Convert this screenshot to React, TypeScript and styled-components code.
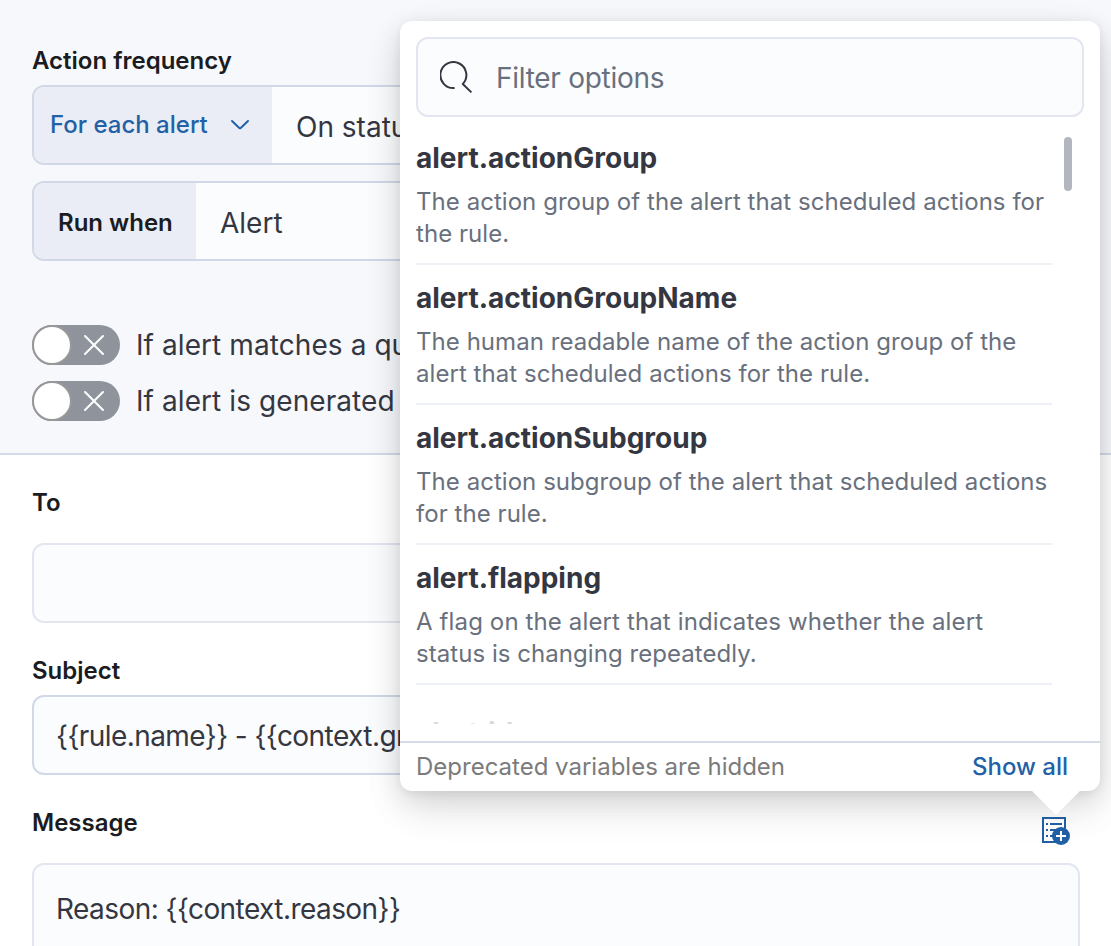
import React from "react";
import styled, { createGlobalStyle } from "styled-components";

const GlobalStyle = createGlobalStyle`
  *, *::before, *::after { box-sizing: border-box; }
  body {
    margin: 0;
    background: #fff;
    color: #343741;
    font-family: Inter, "Liberation Sans", sans-serif;
    overflow: hidden;
  }
`;

const Page = styled.main`
  position: relative;
  width: 1111px;
  height: 946px;
  overflow: hidden;
  background: #fff;
`;

const FrequencySection = styled.section`
  display: flex;
  flex-direction: column;
  height: 455px;
  padding: 45px 31px 0 32px;
  background: #f7f8fc;
  border-bottom: 2px solid #d3dae8;
`;

const FieldsSection = styled.section`
  display: flex;
  flex-direction: column;
  padding: 32px 31px 0 32px;
`;

const Label = styled.div<{ $gap: number }>`
  height: 32px;
  margin-bottom: ${(p) => p.$gap}px;
  font-size: 24px;
  line-height: 32px;
  font-weight: 600;
  color: #1a1c21;
`;

const Control = styled.div<{ $light?: boolean; $height?: number; $gap?: number }>`
  display: flex;
  flex: none;
  width: 1048px;
  height: ${(p) => p.$height ?? 80}px;
  margin-bottom: ${(p) => p.$gap ?? 0}px;
  overflow: hidden;
  background: #fbfcfe;
  border: 2px solid ${(p) => (p.$light ? "#e3e6f1" : "#d1d9e8")};
  border-radius: 12px;
`;

const Prepend = styled.div<{ $width: number }>`
  display: flex;
  align-items: center;
  flex: none;
  width: ${(p) => p.$width}px;
  background: #eaedf5;
  font-size: 24px;
  font-weight: 600;
  color: #1a1c21;
  padding: 2px 0 0 24px;
`;

const PrependButton = styled(Prepend)`
  padding: 0 0 2px 16px;
  gap: 20px;
  font-weight: 500;
  color: #2261a6;
`;

const Value = styled.div`
  padding: 0 24px;
  font-size: 28px;
  line-height: 81px;
  white-space: nowrap;
`;

const TemplateValue = styled.div<{ $lineHeight: number }>`
  padding: 0 22px;
  font-size: 28px;
  line-height: ${(p) => p.$lineHeight}px;
  letter-spacing: -0.56px;
  white-space: nowrap;
`;

const SwitchRow = styled.div`
  display: flex;
  align-items: center;
  gap: 16px;
  height: 40px;
  margin-bottom: 16px;
  font-size: 28px;
  letter-spacing: 0.08px;
  white-space: nowrap;
`;

const SwitchTrack = styled.span`
  display: flex;
  align-items: center;
  justify-content: space-between;
  width: 88px;
  height: 40px;
  padding-right: 15px;
  border-radius: 20px;
  background: #8f949c;
`;

const SwitchThumb = styled.span`
  width: 40px;
  height: 40px;
  border: 2px solid #989898;
  border-radius: 50%;
  background: #fff;
`;

const MessageHeader = styled.div`
  display: flex;
  justify-content: space-between;
  width: 1038px;
  height: 56px;
`;

const IconButton = styled.span`
  height: 28px;
  margin-top: 10px;
`;

const Popover = styled.div`
  position: absolute;
  left: 400px;
  top: 21px;
  width: 700px;
  height: 770px;
  display: flex;
  flex-direction: column;
  border-radius: 12px;
  background: #fff;
  box-shadow:
    0 2px 10px rgba(0, 0, 0, 0.06),
    0 7px 26px rgba(0, 0, 0, 0.07),
    0 14px 40px rgba(0, 0, 0, 0.08),
    0 20px 44px rgba(0, 0, 0, 0.06);
`;

const Arrow = styled.svg`
  position: absolute;
  left: 632px;
  top: 769px;
`;

const SearchBox = styled.div`
  display: flex;
  align-items: center;
  flex: none;
  height: 80px;
  margin: 16px 16px 0;
  padding: 2px 0 0 22px;
  gap: 22px;
  border: 2px solid #e3e6f1;
  border-radius: 12px;
  background: #fbfcfe;
  font-size: 28px;
  letter-spacing: -0.28px;
  color: #69707d;
`;

const ListViewport = styled.div`
  display: flex;
  justify-content: space-between;
  flex: none;
  height: 599px;
  margin-top: 8px;
  padding: 0 28px 0 16px;
  overflow: hidden;
`;

const List = styled.div`
  width: 636px;
`;

const ScrollThumb = styled.div`
  width: 8px;
  height: 54px;
  margin-top: 12px;
  border-radius: 4px;
  background: #b2b6be;
`;

const Item = styled.div`
  height: 140px;
  padding-top: 12px;
  border-bottom: 2px solid #eef2f7;
`;

const ItemTitle = styled.div`
  font-size: 28px;
  line-height: 42px;
  font-weight: 700;
`;

const ItemText = styled.div`
  margin-top: 7px;
  font-size: 24px;
  line-height: 32px;
  letter-spacing: 0.05px;
  color: #69707d;
  white-space: pre-line;

  ${Item}:nth-child(4) &::first-line {
    letter-spacing: 0.13px;
  }
`;

const FadedTitle = styled(ItemTitle)`
  margin-top: 27px;
  opacity: 0.18;
`;

const Footer = styled.div`
  display: flex;
  align-items: center;
  justify-content: space-between;
  height: 50px;
  margin-top: auto;
  padding: 0 32px 2px 16px;
  border-top: 2px solid #d3dae8;
  font-size: 24px;
  color: #7b7b7b;
`;

const ShowAll = styled.span`
  font-weight: 500;
  color: #2261a6;
`;

const variables = [
  { name: "alert.actionGroup", text: "The action group of the alert that scheduled actions for\nthe rule." },
  { name: "alert.actionGroupName", text: "The human readable name of the action group of the\nalert that scheduled actions for the rule." },
  { name: "alert.actionSubgroup", text: "The action subgroup of the alert that scheduled actions\nfor the rule." },
  { name: "alert.flapping", text: "A flag on the alert that indicates whether the alert\nstatus is changing repeatedly." },
];

function Switch({ label }: { label: string }) {
  return (
    <SwitchRow>
      <SwitchTrack>
        <SwitchThumb />
        <svg width="22" height="22" viewBox="0 0 22 22" fill="none" stroke="#fff" strokeWidth="2" strokeLinecap="round">
          <path d="M2 2l18 18M20 2L2 20" />
        </svg>
      </SwitchTrack>
      {label}
    </SwitchRow>
  );
}

function SearchIcon() {
  return (
    <svg width="34" height="34" viewBox="0 0 34 34" fill="none" stroke="#343741" strokeWidth="2">
      <path d="M14.6 27A13 13 0 1 1 22.8 23L31.4 31.4" strokeLinejoin="round" />
    </svg>
  );
}

function AddVariableIcon() {
  return (
    <svg width="28" height="28" viewBox="0 0 28 28" fill="#2261a6">
      <path fillRule="evenodd" d="M0 0h24v26H0zM2 2v22h20V2z" />
      <path d="M4 6h2v2H4zM8 6h12v2H8zM4 12h2v2H4zM8 12h8v2H8zM4 18h2v2H4zM8 18h4v2H8z" />
      <circle cx="19" cy="19" r="9" />
      <path d="M18 14h2v4h4v2h-4v4h-2v-4h-4v-2h4z" fill="#fff" />
    </svg>
  );
}

export default function App() {
  return (
    <Page>
      <GlobalStyle />
      <FrequencySection>
        <Label $gap={8}>Action frequency</Label>
        <Control $gap={16}>
          <PrependButton $width={238}>
            For each alert
            <svg width="24" height="24" viewBox="0 0 24 24" fill="none" stroke="#2261a6" strokeWidth="2" strokeLinecap="round" strokeLinejoin="round">
              <path d="M4 9l7.3 7q.7.6 1.4 0L20 9" />
            </svg>
          </PrependButton>
          <Value>On status changes</Value>
        </Control>
        <Control $gap={64}>
          <Prepend $width={162}>Run when</Prepend>
          <Value>Alert</Value>
        </Control>
        <Switch label="If alert matches a query" />
        <Switch label="If alert is generated during timeframe" />
      </FrequencySection>
      <FieldsSection>
        <Label $gap={24}>To</Label>
        <Control $light $gap={32} />
        <Label $gap={8}>Subject</Label>
        <Control $gap={32}>
          <TemplateValue $lineHeight={79}>{"{{rule.name}} - {{context.group}}"}</TemplateValue>
        </Control>
        <MessageHeader>
          <Label $gap={24}>Message</Label>
          <IconButton>
            <AddVariableIcon />
          </IconButton>
        </MessageHeader>
        <Control $light $height={200}>
          <TemplateValue $lineHeight={88}>{"Reason: {{context.reason}}"}</TemplateValue>
        </Control>
      </FieldsSection>
      <Popover>
        <Arrow width="48" height="26" viewBox="0 0 48 26" fill="#fff">
          <path d="M0 0H48V1L24 25L0 1Z" />
        </Arrow>
        <SearchBox>
          <SearchIcon />
          Filter options
        </SearchBox>
        <ListViewport>
          <List>
            {variables.map((v) => (
              <Item key={v.name}>
                <ItemTitle>{v.name}</ItemTitle>
                <ItemText>{v.text}</ItemText>
              </Item>
            ))}
            <FadedTitle>alert.id</FadedTitle>
          </List>
          <ScrollThumb />
        </ListViewport>
        <Footer>
          Deprecated variables are hidden
          <ShowAll>Show all</ShowAll>
        </Footer>
      </Popover>
    </Page>
  );
}
